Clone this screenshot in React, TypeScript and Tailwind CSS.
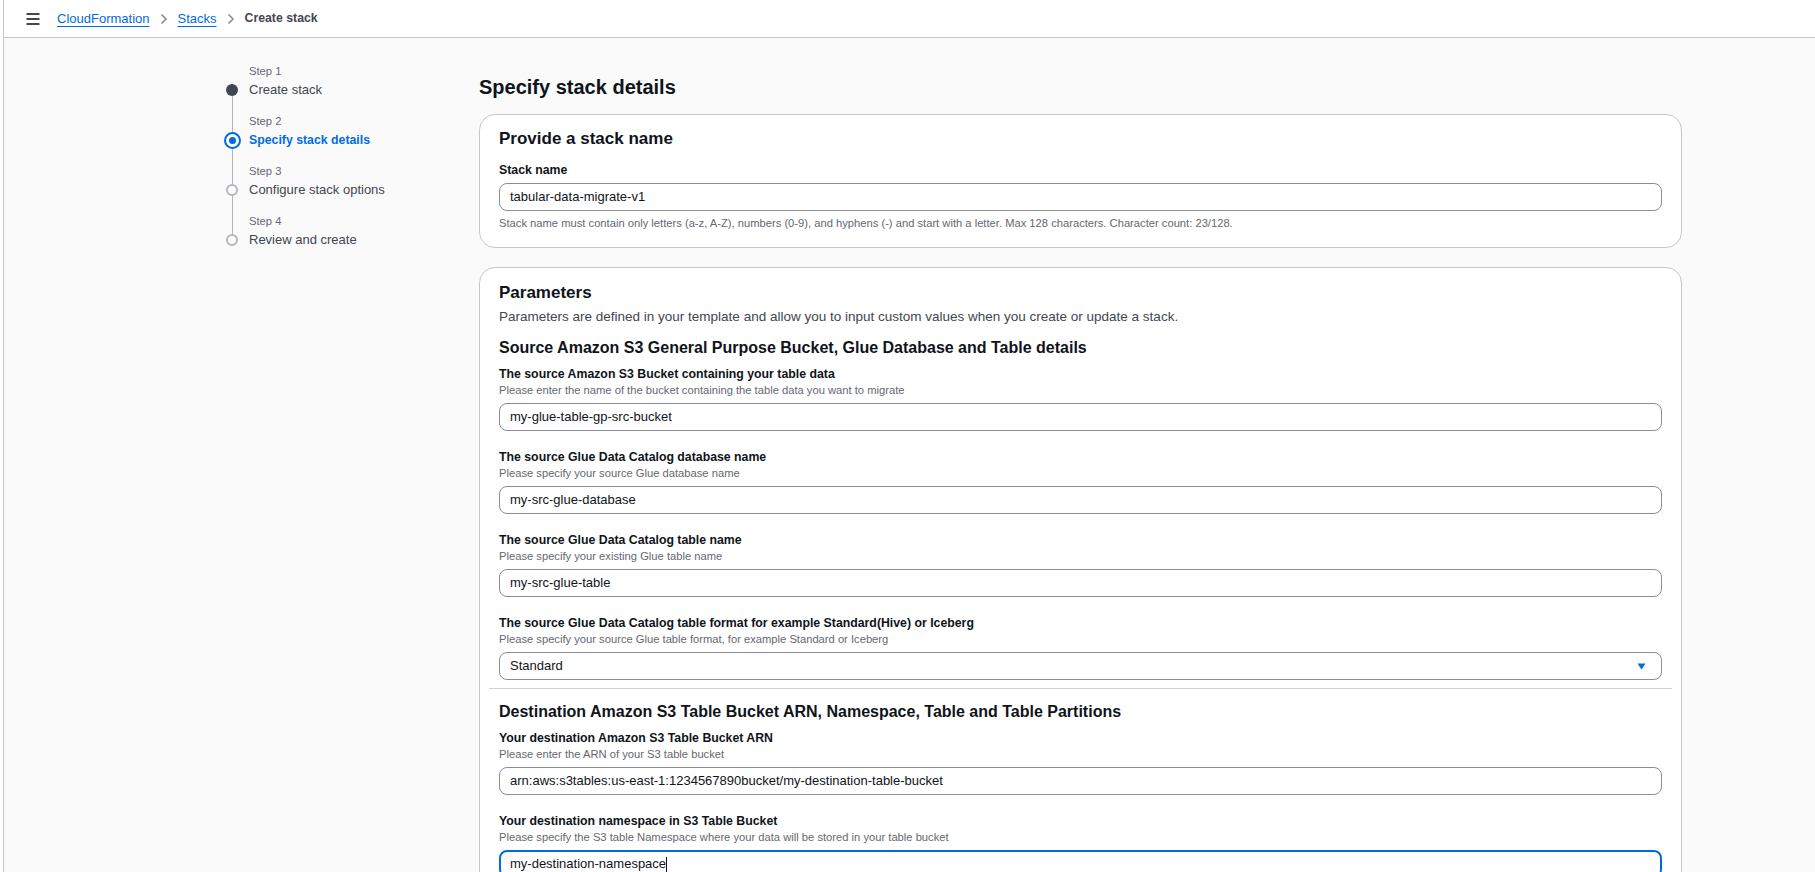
import type { ReactNode } from "react";

const font = "font-['Liberation_Sans',Arial,sans-serif]";

type Field = {
  label: string;
  hint: string;
  value: string;
  kind?: "input" | "select" | "focused";
};

const sourceFields: Field[] = [
  {
    label: "The source Amazon S3 Bucket containing your table data",
    hint: "Please enter the name of the bucket containing the table data you want to migrate",
    value: "my-glue-table-gp-src-bucket",
  },
  {
    label: "The source Glue Data Catalog database name",
    hint: "Please specify your source Glue database name",
    value: "my-src-glue-database",
  },
  {
    label: "The source Glue Data Catalog table name",
    hint: "Please specify your existing Glue table name",
    value: "my-src-glue-table",
  },
  {
    label: "The source Glue Data Catalog table format for example Standard(Hive) or Iceberg",
    hint: "Please specify your source Glue table format, for example Standard or Iceberg",
    value: "Standard",
    kind: "select",
  },
];

const destFields: Field[] = [
  {
    label: "Your destination Amazon S3 Table Bucket ARN",
    hint: "Please enter the ARN of your S3 table bucket",
    value: "arn:aws:s3tables:us-east-1:1234567890bucket/my-destination-table-bucket",
  },
  {
    label: "Your destination namespace in S3 Table Bucket",
    hint: "Please specify the S3 table Namespace where your data will be stored in your table bucket",
    value: "my-destination-namespace",
    kind: "focused",
  },
];

const steps = [
  { n: 1, title: "Create stack", state: "done" },
  { n: 2, title: "Specify stack details", state: "active" },
  { n: 3, title: "Configure stack options", state: "todo" },
  { n: 4, title: "Review and create", state: "todo" },
] as const;

function Hamburger() {
  return (
    <svg width="14" height="12" viewBox="0 0 14 12" aria-hidden>
      <path d="M0.5 1h13M0.5 6h13M0.5 11h13" stroke="#424650" strokeWidth="2" />
    </svg>
  );
}

function Crumb() {
  return (
    <svg width="8" height="12" viewBox="0 0 8 12" className="mx-[10px]" aria-hidden>
      <path d="M1.5 1.5L6 6l-4.5 4.5" fill="none" stroke="#8c8c94" strokeWidth="1.6" />
    </svg>
  );
}

function StepDot({ state }: { state: "done" | "active" | "todo" }) {
  if (state === "active") {
    return (
      <div className="flex h-[17px] w-[17px] items-center justify-center rounded-full border-2 border-[#006ce0] bg-white">
        <div className="h-[7px] w-[7px] rounded-full bg-[#006ce0]" />
      </div>
    );
  }
  if (state === "done") return <div className="h-[12px] w-[12px] rounded-full bg-[#424650]" />;
  return <div className="h-[12px] w-[12px] rounded-full border-2 border-[#b4b4bb] bg-white" />;
}

function WizardNav() {
  return (
    <nav className="w-[255px] shrink-0 pt-[26px]">
      {steps.map((s, i) => (
        <div key={s.n} className="flex h-[50px]">
          <div className="flex w-4 flex-col items-center">
            <div
              className={`w-px shrink-0 ${s.state === "active" ? "h-[18px]" : "h-[20px]"} ${
                i === 0 ? "bg-transparent" : "bg-[#b4b4bb]"
              }`}
            />
            <StepDot state={s.state} />
            <div className={`w-px flex-1 ${i === steps.length - 1 ? "bg-transparent" : "bg-[#b4b4bb]"}`} />
          </div>
          <div className="ml-[9px]">
            <div className="text-[11.2px] leading-[14px] text-[#656871]">Step {s.n}</div>
            <div
              className={`mt-[2px] leading-[20px] ${
                s.state === "active"
                  ? "text-[12.3px] font-bold text-[#006ce0]"
                  : "text-[13px] text-[#424650]"
              }`}
            >
              {s.title}
            </div>
          </div>
        </div>
      ))}
    </nav>
  );
}

function TextBox({ value, kind = "input" }: { value: string; kind?: Field["kind"] }) {
  if (kind === "focused") {
    return (
      <div className="flex h-[28px] items-center rounded-[8px] border-2 border-[#006ce0] bg-white px-[9px] text-[13px] text-[#0f141a]">
        <span>{value}</span>
        <span className="h-[15px] w-px bg-[#0f141a]" />
      </div>
    );
  }
  if (kind === "select") {
    return (
      <div className="flex h-[28px] items-center justify-between rounded-[8px] border border-[#8c8c94] bg-white pl-[10px] pr-[15px] text-[13px] text-[#0f141a]">
        <span>{value}</span>
        <svg width="9" height="7" viewBox="0 0 9 7" aria-hidden>
          <path d="M0.5 0.5h8L4.5 6.5z" fill="#006ce0" />
        </svg>
      </div>
    );
  }
  return (
    <div className="flex h-[28px] items-center rounded-[8px] border border-[#8c8c94] bg-white px-[10px] text-[13px] text-[#0f141a]">
      {value}
    </div>
  );
}

function FormField({ field }: { field: Field }) {
  return (
    <div>
      <div className="text-[12.3px] font-bold leading-[18px] text-[#0f141a]">{field.label}</div>
      <div className="text-[11.2px] leading-[14px] text-[#656871]">{field.hint}</div>
      <div className="mt-[6px]">
        <TextBox value={field.value} kind={field.kind} />
      </div>
    </div>
  );
}

function Card({ children, className = "" }: { children: ReactNode; className?: string }) {
  return (
    <section className={`rounded-[16px] border border-[#c6c6cd] bg-white px-[19px] ${className}`}>{children}</section>
  );
}

function FieldGroup({ title, fields }: { title: string; fields: Field[] }) {
  return (
    <div>
      <h3 className="text-[16px] font-bold leading-[22px] text-[#0f141a]">{title}</h3>
      <div className="mt-[6px] flex flex-col gap-[17px]">
        {fields.map((f) => (
          <FormField key={f.label} field={f} />
        ))}
      </div>
    </div>
  );
}

export default function App() {
  return (
    <div className={`${font} flex min-h-screen bg-[#fafafa] text-[#0f141a]`}>
      <div className="w-[4px] shrink-0 border-r border-[#c6c6cd] bg-white" />
      <div className="flex min-w-0 flex-1 flex-col">
        <header className="flex h-[38px] items-center border-b border-[#c6c6cd] bg-white pl-[22px]">
          <Hamburger />
          <nav className="ml-[17px] flex items-center text-[13px]">
            <a className="text-[#006ce0] underline underline-offset-[3px]">CloudFormation</a>
            <Crumb />
            <a className="text-[#006ce0] underline underline-offset-[3px]">Stacks</a>
            <Crumb />
            <span className="text-[12.3px] font-bold text-[#424650]">Create stack</span>
          </nav>
        </header>

        <div className="flex pl-[220px] pr-[133px]">
          <WizardNav />

          <main className="min-w-0 flex-1 pt-[36px] pb-10">
            <h1 className="text-[20px] font-bold leading-[26px] text-[#0f141a]">Specify stack details</h1>

            <Card className="mt-[14px] pt-[12px] pb-[17px]">
              <h2 className="text-[17px] font-bold leading-[24px]">Provide a stack name</h2>
              <div className="mt-[10px] text-[12.3px] font-bold leading-[18px]">Stack name</div>
              <div className="mt-[4px]">
                <TextBox value="tabular-data-migrate-v1" />
              </div>
              <div className="mt-[5px] text-[11.2px] leading-[14px] text-[#656871]">
                Stack name must contain only letters (a-z, A-Z), numbers (0-9), and hyphens (-) and start with a letter.
                Max 128 characters. Character count: 23/128.
              </div>
            </Card>

            <Card className="mt-[19px] pt-[13px] pb-[20px]">
              <h2 className="text-[17px] font-bold leading-[24px]">Parameters</h2>
              <p className="mt-[3px] text-[13.5px] leading-[18px] text-[#424650]">
                Parameters are defined in your template and allow you to input custom values when you create or update a
                stack.
              </p>
              <div className="mt-[11px]">
                <FieldGroup
                  title="Source Amazon S3 General Purpose Bucket, Glue Database and Table details"
                  fields={sourceFields}
                />
              </div>
              <div className="-mx-[10px] mt-[8px] h-px bg-[#d1d1d6]" />
              <div className="mt-[12px]">
                <FieldGroup
                  title="Destination Amazon S3 Table Bucket ARN, Namespace, Table and Table Partitions"
                  fields={destFields}
                />
              </div>
            </Card>
          </main>
        </div>
      </div>
    </div>
  );
}
